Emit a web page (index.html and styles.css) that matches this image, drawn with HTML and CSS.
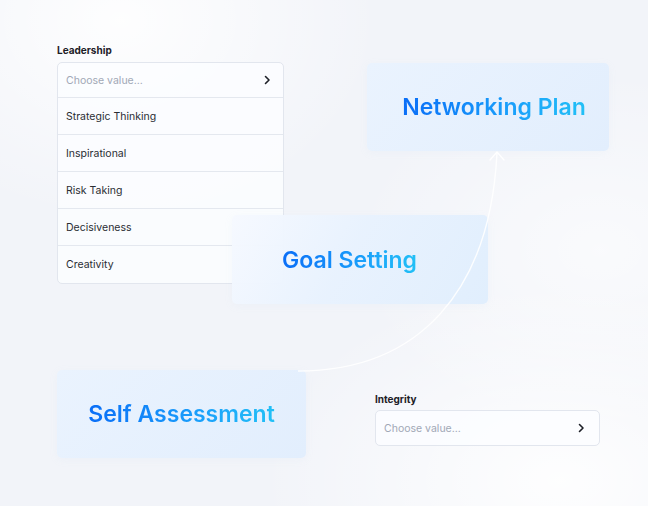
FILE: index.html
```html
<!DOCTYPE html>
<html>
<head>
<meta charset="utf-8">
<link rel="stylesheet" href="styles.css">
</head>
<body>
<div class="canvas">
  <svg class="connector" width="648" height="506" viewBox="0 0 648 506">
    <path d="M298 371 C 420 371, 490 290, 497 153" fill="none" stroke="rgba(255,255,255,0.9)" stroke-width="1.4"/>
    <path d="M490 160 L497 152 L504 160" fill="none" stroke="rgba(255,255,255,0.95)" stroke-width="1.4" stroke-linecap="round" stroke-linejoin="round"/>
  </svg>

  <div class="field leadership">
    <div class="label">Leadership</div>
    <div class="select list">
      <div class="row head"><span class="placeholder">Choose value...</span>
        <svg class="chev" width="8" height="10" viewBox="0 0 8 10"><path d="M2.5 1.5 L6 5 L2.5 8.5" fill="none" stroke="#1e2128" stroke-width="1.6" stroke-linecap="round" stroke-linejoin="round"/></svg>
      </div>
      <div class="row">Strategic Thinking</div>
      <div class="row">Inspirational</div>
      <div class="row">Risk Taking</div>
      <div class="row">Decisiveness</div>
      <div class="row last">Creativity</div>
    </div>
  </div>

  <div class="card networking"><span class="grad">Networking Plan</span></div>
  <div class="card goal"><span class="grad">Goal Setting</span></div>
  <div class="card self"><span class="grad">Self Assessment</span></div>

  <div class="field integrity">
    <div class="label">Integrity</div>
    <div class="select">
      <div class="row head single"><span class="placeholder">Choose value...</span>
        <svg class="chev" width="8" height="10" viewBox="0 0 8 10"><path d="M2.5 1.5 L6 5 L2.5 8.5" fill="none" stroke="#1e2128" stroke-width="1.6" stroke-linecap="round" stroke-linejoin="round"/></svg>
      </div>
    </div>
  </div>
</div>
</body>
</html>
```
FILE: styles.css
```css
html, body {
  margin: 0;
  padding: 0;
}
body {
  width: 648px;
  height: 506px;
  overflow: hidden;
  font-family: Inter, "Noto Sans", sans-serif;
  background:
    radial-gradient(ellipse 260px 200px at 120px 20px, rgba(255,255,255,0.9), rgba(255,255,255,0)),
    radial-gradient(ellipse 300px 200px at 560px 480px, rgba(255,255,255,0.9), rgba(255,255,255,0)),
    radial-gradient(ellipse 250px 180px at 600px 250px, rgba(255,255,255,0.6), rgba(255,255,255,0)),
    #f2f4f9;
}
.canvas {
  position: relative;
  width: 648px;
  height: 506px;
}
.connector {
  position: absolute;
  left: 0;
  top: 0;
  z-index: 3;
}
.field {
  position: absolute;
  display: flex;
  flex-direction: column;
  gap: 6px;
}
.leadership {
  left: 57px;
  top: 44px;
  width: 227px;
}
.integrity {
  left: 375px;
  top: 393px;
  width: 225px;
  gap: 5px;
}
.label {
  font-size: 10px;
  font-weight: 700;
  color: #1d2027;
  line-height: 12px;
}
.select {
  background: rgba(252,253,255,0.85);
  border: 1px solid #e2e6ee;
  border-radius: 5px;
  display: flex;
  flex-direction: column;
}
.row {
  height: 36px;
  box-sizing: border-box;
  display: flex;
  align-items: center;
  justify-content: space-between;
  padding: 0 8px 0 8px;
  font-size: 10.5px;
  color: #2a2d33;
  border-bottom: 1px solid #e4e8ef;
}
.row.head {
  height: 35px;
  padding-right: 12px;
}
.list .row:not(.head) {
  height: 37px;
}
.row.last, .row.single {
  border-bottom: none;
}
.row.single {
  height: 34px;
  padding-right: 14px;
}
.placeholder {
  color: #a1a8b6;
}
.chev {
  display: block;
}
.card {
  position: absolute;
  display: flex;
  align-items: center;
  justify-content: center;
  border-radius: 5px;
  background: linear-gradient(135deg, #eaf3fe 0%, #e2eefd 100%);
  box-shadow: 0 2px 8px rgba(180,200,230,0.08);
}
.networking {
  left: 367px;
  top: 63px;
  width: 242px;
  height: 88px;
  padding-left: 12px;
  box-sizing: border-box;
}
.goal {
  left: 232px;
  top: 215px;
  width: 256px;
  height: 89px;
  z-index: 2;
  padding-right: 21px;
  box-sizing: border-box;
  background: linear-gradient(120deg, rgba(246,249,255,0.97) 0%, rgba(232,242,254,0.97) 45%, rgba(224,238,253,0.97) 100%);
}
.self {
  left: 57px;
  top: 370px;
  width: 249px;
  height: 88px;
}
.grad {
  font-size: 23px;
  font-weight: 600;
  background: linear-gradient(90deg, #0a6ef7 0%, #1aa0fb 60%, #22c0f6 100%);
  -webkit-background-clip: text;
  background-clip: text;
  color: transparent;
}
```
